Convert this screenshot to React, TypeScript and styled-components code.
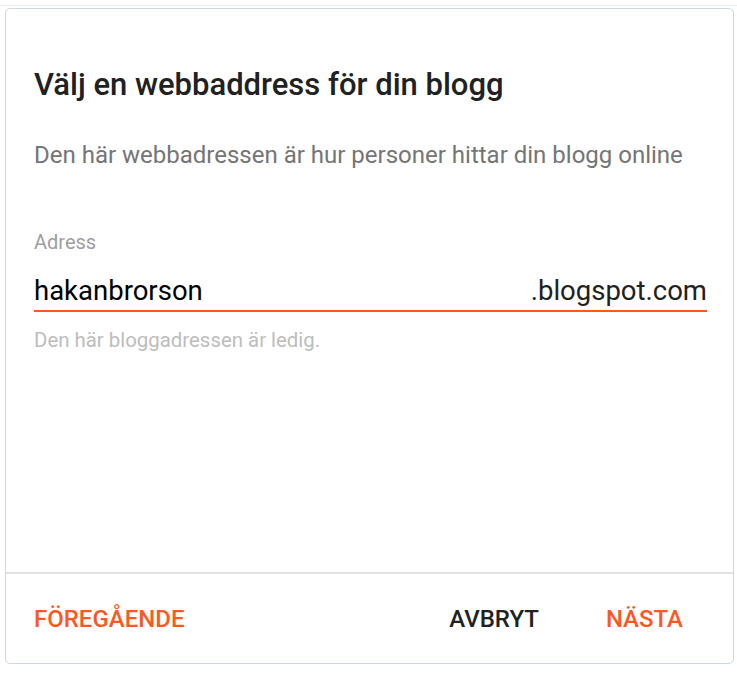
import React from "react";
import styled, {createGlobalStyle} from "styled-components";

const COLOR = {
    accent: "#ff5722",
    text: "#212121",
    secondary: "#757575",
    hint: "#9e9e9e",
    helper: "#bdbdbd",
    border: "#cfd8dc",
    rule: "#dfe1e5",
};

const Global = createGlobalStyle`
    html, body {
        margin: 0;
        padding: 0;
        background: #fff;
        font-family: Roboto, "Noto Sans", Arial, sans-serif;
    }
`;

const Page = styled.div`
    width: 737px;
    padding-top: 5px;
`;
const TopRule = styled.div`
    height: 1px;
    background: #eceff1;
`;
const Card = styled.div`
    margin: 2px 0 0 5px;
    width: 729px;
    height: 656px;
    box-sizing: border-box;
    border: 1px solid ${COLOR.border};
    border-radius: 5px;
    display: flex;
    flex-direction: column;
`;
const Body = styled.div`
    flex: 1;
    padding: 0 26px 0 28px;
`;
const Title = styled.h1`
    margin: 58px 0 0;
    font-size: 31px;
    line-height: 36px;
    font-weight: 500;
    color: ${COLOR.text};
`;
const Subtitle = styled.p`
    margin: 38px 0 0;
    font-size: 24px;
    line-height: 28px;
    color: ${COLOR.secondary};
`;
const Field = styled.div`
    margin-top: 61px;
`;
const Label = styled.label`
    display: block;
    font-size: 20px;
    line-height: 24px;
    color: ${COLOR.hint};
`;
const InputRow = styled.div`
    display: flex;
    align-items: baseline;
    justify-content: space-between;
    margin-top: 21px;
    padding-bottom: 3px;
    border-bottom: 2px solid ${COLOR.accent};
    font-size: 27.5px;
    line-height: 32px;
    color: ${COLOR.text};
`;
const Value = styled.span`
    color: #000;
`;
const Helper = styled.div`
    margin-top: 16px;
    font-size: 20.4px;
    line-height: 24px;
    color: ${COLOR.helper};
`;
const Footer = styled.div`
    height: 89px;
    border-top: 2px solid ${COLOR.rule};
    display: flex;
    align-items: center;
    padding: 0 50px 0 28px;
`;
const Spacer = styled.div`
    flex: 1;
`;
const Button = styled.button<{ $primary?: boolean; $gap?: number }>`
    border: none;
    background: none;
    padding: 0;
    margin-left: ${p => p.$gap ?? 0}px;
    font-family: inherit;
    font-size: 24px;
    font-weight: 500;
    text-transform: uppercase;
    color: ${p => p.$primary ? COLOR.accent : COLOR.text};
    cursor: pointer;
`;

function App() {
    return (
        <Page>
            <Global/>
            <TopRule/>
            <Card>
                <Body>
                    <Title>Välj en webbaddress för din blogg</Title>
                    <Subtitle>Den här webbadressen är hur personer hittar din blogg online</Subtitle>
                    <Field>
                        <Label>Adress</Label>
                        <InputRow>
                            <Value>hakanbrorson</Value>
                            <span>.blogspot.com</span>
                        </InputRow>
                        <Helper>Den här bloggadressen är ledig.</Helper>
                    </Field>
                </Body>
                <Footer>
                    <Button $primary>Föregående</Button>
                    <Spacer/>
                    <Button>Avbryt</Button>
                    <Button $primary $gap={67}>Nästa</Button>
                </Footer>
            </Card>
        </Page>
    );
}

export default App;
